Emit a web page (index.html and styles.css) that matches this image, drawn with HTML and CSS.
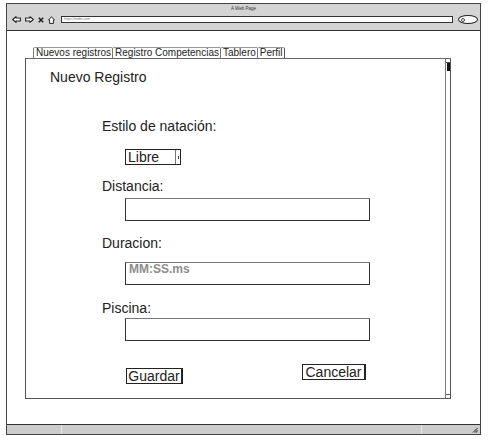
FILE: index.html
```html
<!DOCTYPE html>
<html lang="es">
<head>
<meta charset="utf-8">
<title>A Web Page</title>
<link rel="stylesheet" href="styles.css">
</head>
<body>
<div class="browser">
  <div class="chrome">
    <div class="title">A Web Page</div>
    <div class="navrow">
      <svg class="nav-ico" width="9" height="7" viewBox="0 0 9 7"><path d="M0.7 3.5 L4 0.6 V2 H8.4 V5 H4 V6.4 Z" fill="#fff" stroke="#222" stroke-width="1.1" stroke-linejoin="round"/></svg>
      <svg class="nav-ico" width="9" height="7" viewBox="0 0 9 7"><path d="M8.3 3.5 L5 0.6 V2 H0.6 V5 H5 V6.4 Z" fill="#fff" stroke="#222" stroke-width="1.1" stroke-linejoin="round"/></svg>
      <svg class="nav-ico" width="6" height="6" viewBox="0 0 6 6"><path d="M0.8 0.8 L5.2 5.2 M5.2 0.8 L0.8 5.2" stroke="#222" stroke-width="1.6"/></svg>
      <svg class="nav-ico" width="7" height="8" viewBox="0 0 7 8"><path d="M0.6 4 L3.5 0.7 L6.4 4 H5.4 V7.4 H1.6 V4 Z" fill="#fff" stroke="#222" stroke-width="1" stroke-linejoin="round"/></svg>
      <div class="url">https://mdm.com</div>
      <div class="search"><span class="search-dot"></span></div>
    </div>
  </div>
  <div class="page">
    <div class="tabs">
      <div class="tab">Nuevos registros</div>
      <div class="tab">Registro Competencias</div>
      <div class="tab">Tablero</div>
      <div class="tab tab-last">Perfil</div>
    </div>
    <div class="panel">
      <div class="form">
        <div class="heading">Nuevo Registro</div>
        <div class="fields">
          <div class="label label-estilo">Estilo de natación:</div>
          <div class="select"><span class="select-text">Libre</span><span class="select-btn"><span class="select-mark"></span></span></div>
          <div class="label label-dist">Distancia:</div>
          <input class="input input-dist" type="text">
          <div class="label label-dur">Duracion:</div>
          <input class="input input-dur" type="text" placeholder="MM:SS.ms">
          <div class="label label-pis">Piscina:</div>
          <input class="input input-pis" type="text">
          <div class="actions">
            <button class="btn btn-save">Guardar</button>
            <button class="btn btn-cancel">Cancelar</button>
          </div>
        </div>
      </div>
      <div class="scrollbar">
        <div class="sb-cap"></div>
        <div class="sb-thumb"></div>
        <div class="sb-track"></div>
        <div class="sb-cap sb-cap-bottom"></div>
      </div>
    </div>
  </div>
  <div class="status">
    <div class="status-seg status-seg1"></div>
    <div class="status-seg status-seg2"></div>
    <svg class="grip" width="6" height="6" viewBox="0 0 6 6"><path d="M5.5 1 L1 5.5 M5.5 3 L3 5.5 M5.5 4.6 L4.6 5.5" stroke="#222" stroke-width="1"/></svg>
  </div>
</div>
</body>
</html>
```

FILE: styles.css
```css
* { box-sizing: border-box; }

html, body {
  margin: 0;
  padding: 0;
  background: #fff;
}

body {
  font-family: "Liberation Sans", Arial, sans-serif;
  color: #222;
}

.browser {
  margin: 3px 0 0 6px;
  width: 475px;
  height: 432px;
  border: 1px solid #444;
  display: flex;
  flex-direction: column;
  background: #fff;
}

.chrome {
  height: 27px;
  background: #d4d4d4;
  border-bottom: 1px solid #333;
  display: flex;
  flex-direction: column;
}

.title {
  height: 8px;
  padding-top: 2px;
  font-size: 4.5px;
  line-height: 5px;
  text-align: center;
  color: #333;
}

.navrow {
  height: 11px;
  margin-top: 2px;
  display: flex;
  align-items: center;
  padding-left: 5px;
}

.nav-ico {
  display: block;
  flex: none;
  margin-right: 4px;
}

.url {
  width: 392px;
  height: 7px;
  margin-left: 2px;
  border: 1px solid #333;
  background: #fff;
  font-size: 3.5px;
  line-height: 5px;
  padding-left: 2px;
  color: #777;
  overflow: hidden;
}

.search {
  width: 20px;
  height: 9px;
  margin-left: 5px;
  border: 1px solid #222;
  border-radius: 50%;
  background: #fff;
  display: flex;
  align-items: center;
  padding-left: 2px;
}

.search-dot {
  width: 4px;
  height: 4px;
  border: 1px solid #444;
  border-radius: 50%;
}

.page {
  flex: 1;
  background: #fff;
  padding: 16px 0 0 18px;
  display: flex;
  flex-direction: column;
}

.tabs {
  display: flex;
  margin-left: 8px;
  height: 11px;
}

.tab {
  height: 11px;
  border-top: 1px solid #999;
  border-left: 1px solid #777;
  border-top-left-radius: 2px;
  background: #fff;
  font-size: 10px;
  line-height: 10px;
  padding: 0 1px 0 2px;
  white-space: nowrap;
  color: #222;
}

.tab-last {
  border-right: 1px solid #555;
  border-top-right-radius: 2px;
}

.panel {
  width: 426px;
  height: 341px;
  border: 1px solid #555;
  border-top-color: #666;
  display: flex;
}

.form {
  flex: 1;
  padding: 9px 0 0 24px;
}

.heading {
  font-size: 14px;
  line-height: 18px;
}

.fields {
  margin-left: 52px;
  display: flex;
  flex-direction: column;
  align-items: flex-start;
}

.label {
  font-size: 14px;
  line-height: 18px;
}

.label-estilo { margin-top: 31px; }
.label-dist { margin-top: 12px; }
.label-dur { margin-top: 13px; }
.label-pis { margin-top: 14px; }

.select {
  margin-top: 14px;
  margin-left: 23px;
  width: 56px;
  height: 16px;
  border: 1px solid #222;
  display: flex;
  background: #fff;
}

.select-text {
  flex: 1;
  font-size: 14px;
  line-height: 14px;
  padding-left: 2px;
}

.select-btn {
  width: 5px;
  border-left: 1px solid #777;
  display: flex;
  align-items: center;
  justify-content: center;
}

.select-mark {
  width: 1px;
  height: 3px;
  background: #444;
}

.input {
  display: block;
  margin-left: 23px;
  width: 245px;
  height: 23px;
  border: 1px solid #333;
  border-top-color: #777;
  background: #fff;
  font-family: "Liberation Sans", Arial, sans-serif;
  font-size: 14px;
  padding: 0 3px;
  outline: none;
}

.input-dist { margin-top: 3px; }
.input-dur {
  margin-top: 10px;
  font-size: 12px;
  font-weight: bold;
  padding-bottom: 9px;
}
.input-pis { margin-top: 1px; }

.input::placeholder {
  color: #8c8c8c;
  font-weight: bold;
}

.actions {
  margin-top: 23px;
  margin-left: 24px;
  width: 240px;
  display: flex;
  justify-content: space-between;
  align-items: flex-start;
}

.btn {
  height: 16px;
  border: 1px solid #222;
  border-right-width: 2px;
  background: #fff;
  font-family: "Liberation Sans", Arial, sans-serif;
  font-size: 14px;
  line-height: 14px;
  padding: 0;
  color: #222;
}

.btn-save {
  width: 57px;
  margin-top: 4px;
}

.btn-cancel {
  width: 64px;
}

.scrollbar {
  width: 5px;
  border-left: 1px solid #777;
  display: flex;
  flex-direction: column;
}

.sb-cap {
  height: 4px;
  border-bottom: 1px solid #555;
}

.sb-cap-bottom {
  border-bottom: none;
  border-top: 1px solid #555;
}

.sb-thumb {
  height: 8px;
  margin: 0 0 0 1px;
  width: 3px;
  background: #111;
}

.sb-track {
  flex: 1;
}

.status {
  height: 10px;
  background: #cccccc;
  border-top: 1px solid #333;
  display: flex;
  align-items: center;
}

.status-seg {
  height: 100%;
  border-right: 1px solid #e6e6e6;
}

.status-seg1 { width: 55px; }
.status-seg2 { width: 360px; }

.grip {
  margin-left: auto;
  margin-right: 2px;
}
```
